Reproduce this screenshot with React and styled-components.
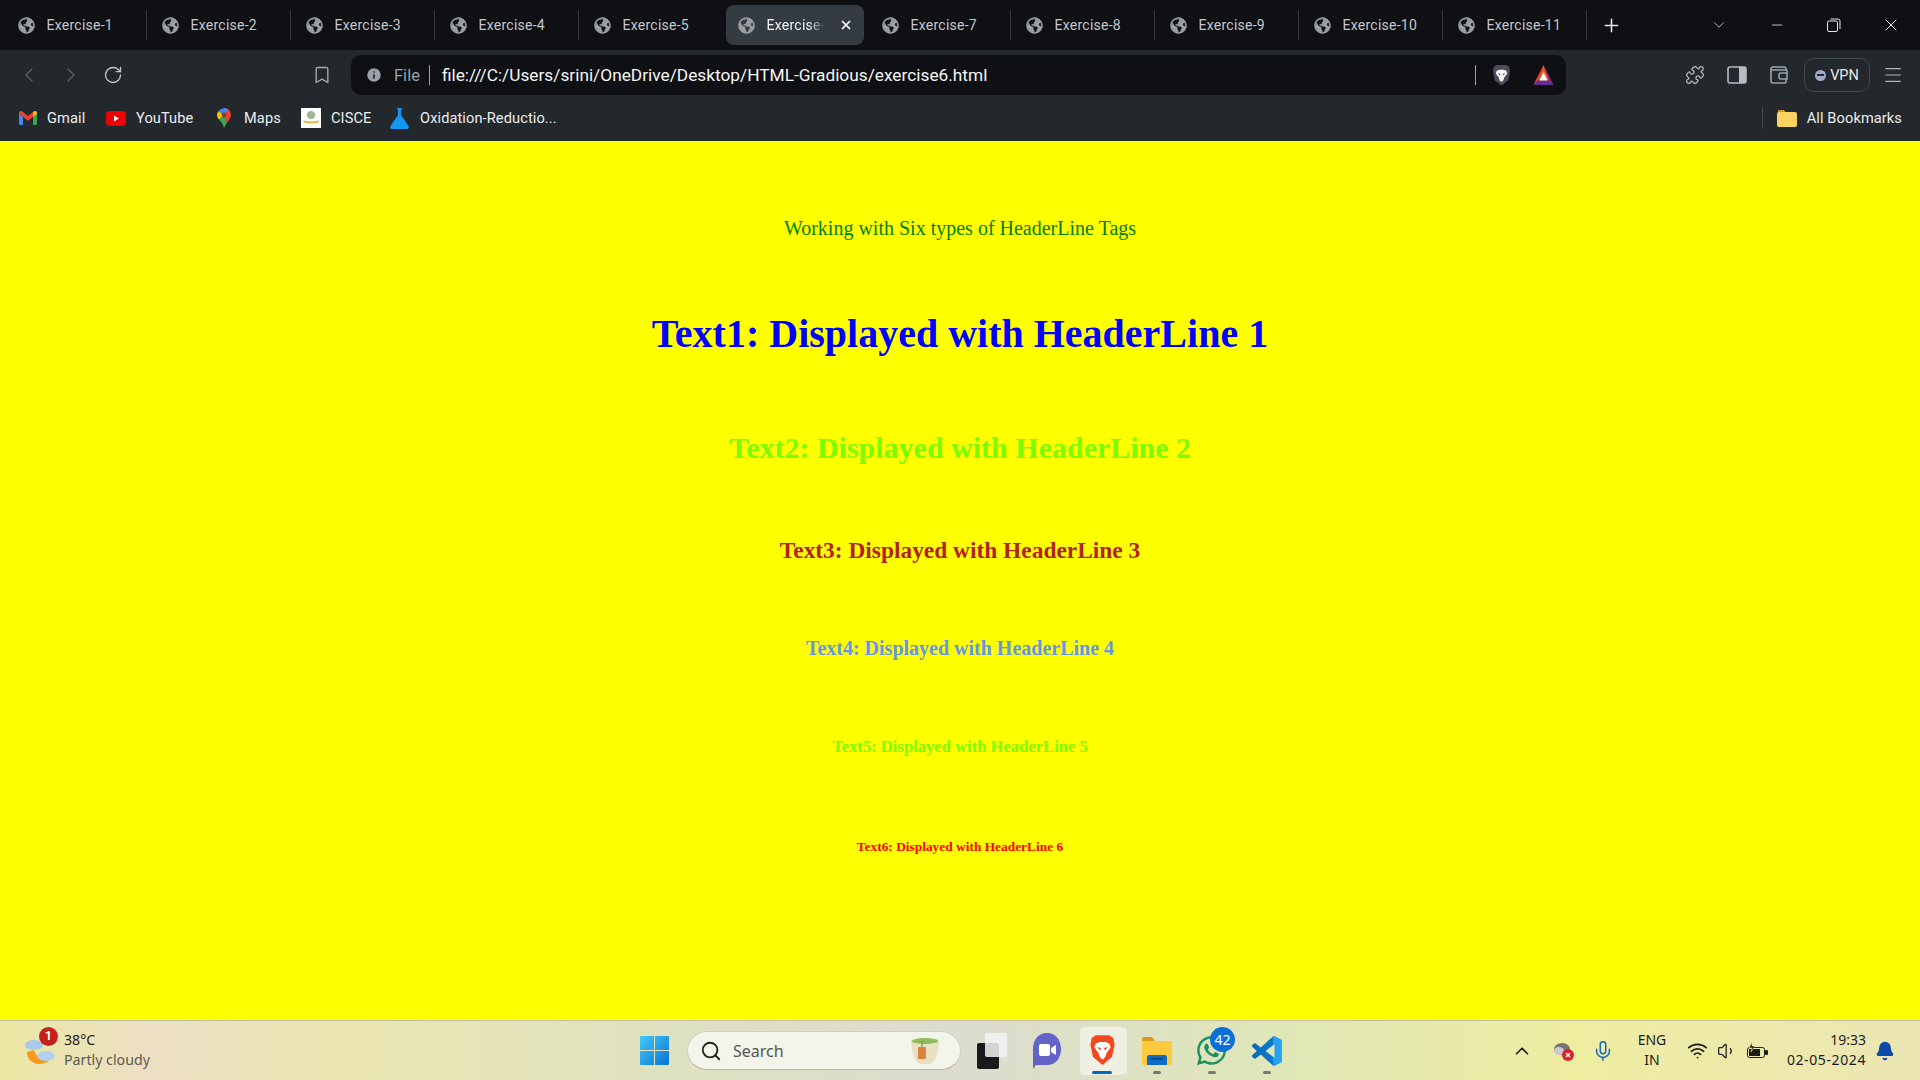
import React from 'react';
import styled, { createGlobalStyle } from 'styled-components';
import {
	ChevronLeft,
	ChevronRight,
	RotateCw,
	Bookmark,
	Plus,
	X,
	Minus,
	ChevronDown,
	ChevronUp,
	Menu,
	Search,
	Puzzle,
	Info,
	Mic,
	Wifi,
	Volume1,
	Bell,
} from 'lucide-react';
import { FaGlobeAmericas, FaWhatsapp } from 'react-icons/fa';

const tabs = ['Exercise-1', 'Exercise-2', 'Exercise-3', 'Exercise-4', 'Exercise-5', 'Exercise-', 'Exercise-7', 'Exercise-8', 'Exercise-9', 'Exercise-10', 'Exercise-11'];

const headings = [
	{ level: 'h1', text: 'Text1: Displayed with HeaderLine 1', size: 40, color: '#0000ff', top: 70 },
	{ level: 'h2', text: 'Text2: Displayed with HeaderLine 2', size: 30, color: '#7cfc00', top: 74 },
	{ level: 'h3', text: 'Text3: Displayed with HeaderLine 3', size: 23.4, color: '#b22222', top: 72 },
	{ level: 'h4', text: 'Text4: Displayed with HeaderLine 4', size: 20, color: '#6495ed', top: 73 },
	{ level: 'h5', text: 'Text5: Displayed with HeaderLine 5', size: 16.6, color: '#7cfc00', top: 77 },
	{ level: 'h6', text: 'Text6: Displayed with HeaderLine 6', size: 13.4, color: '#ff0000', top: 82 },
];

const GmailIcon = () => (
	<svg width='18' height='14' viewBox='0 0 18 14'>
		<path d='M0 2v10.5A1.5 1.5 0 0 0 1.5 14H4V6z' fill='#4285f4' />
		<path d='M14 14h2.5a1.5 1.5 0 0 0 1.5-1.5V2l-4 4z' fill='#34a853' />
		<path d='M0 2l4 4 5 3.8L14 6l4-4c0-1.8-2-2.6-3.2-1.6L9 5 3.2.4C2 -.6 0 .2 0 2z' fill='#ea4335' />
		<path d='M14 1.2V6l4-3V2c0-1.8-2-2.6-3.2-1.6z' fill='#fbbc04' />
	</svg>
);

const YoutubeIcon = () => (
	<svg width='20' height='15' viewBox='0 0 20 15'>
		<rect width='20' height='15' rx='4' fill='#f00000' />
		<path d='M8 4.5v6l5-3z' fill='#fff' />
	</svg>
);

const MapsIcon = () => (
	<svg width='14' height='20' viewBox='0 0 14 20'>
		<path d='M7 0a7 7 0 0 1 7 7c0 4-4 6-7 13z' fill='#ea4335' />
		<path d='M1.500 3A7 7 0 0 0 0 7c0 2 1 3.400 2 4.600L7 7z' fill='#fbbc04' />
		<path d='M2 11.600C4 14 6 16 7 20c.6-2 1.600-3.700 2.800-5.300L7 7z' fill='#34a853' />
		<path d='M1.500 3A7 7 0 0 1 11.500 1.600L7 7z' fill='#4285f4' />
		<circle cx='7' cy='7' r='2.400' fill='#7a4a12' />
	</svg>
);

const CisceIcon = () => (
	<svg width='20' height='20' viewBox='0 0 20 20'>
		<rect width='20' height='20' fill='#fff' />
		<circle cx='10' cy='7' r='4' fill='#9db39a' />
		<path d='M2 12c4 2 12 2 16 0l-1 2.500c-4 1-10 1-14 0z' fill='#e0b23c' />
	</svg>
);

const FlaskIcon = () => (
	<svg width='19' height='21' viewBox='0 0 19 21'>
		<path d='M7 0h5v1.500h-1V7l7.500 11c.8 1.400 0 3-1.500 3H2C.5 21-.3 19.400.5 18L8 7V1.500H7z' fill='#1297f2' />
	</svg>
);

const LionIcon = ({ size = 22, color = '#4b4c5c', face = '#fff' }) => (
	<svg width={size} height={size * 1.2} viewBox='0 0 20 24'>
		<path d='M5 1h10l3 2 1 5-2 9-7 6-7-6-2-9 1-5z' fill={color} />
		<path d='M5 7l3-1h4l3 1 1 3-3 4-1 3-2 2-2-2-1-3-3-4z' fill={face} />
		<path d='M6 9.500l3 1-1 1.500zM14 9.500l-3 1 1 1.500z' fill={color} />
	</svg>
);

const BatIcon = () => (
	<svg width='23' height='22' viewBox='0 0 24 24'>
		<path d='M12 1L1 23l5-5z' fill='#f4412a' />
		<path d='M12 1l-6 17h12z' fill='#f4592a' />
		<path d='M1 23h22l-5-5H6z' fill='#662d91' />
		<path d='M12 1l11 22-5-5z' fill='#a5286e' />
		<path d='M12 9l4.500 9h-9z' fill='#fff' />
	</svg>
);

const SidebarIcon = () => (
	<svg width='20' height='20' viewBox='0 0 20 20'>
		<rect x='1' y='2' width='18' height='16' rx='2' fill='none' stroke='#b4bcc4' strokeWidth='1.600' />
		<rect x='12' y='2' width='7' height='16' fill='#b4bcc4' />
	</svg>
);

const WalletIcon = () => (
	<svg width='20' height='20' viewBox='0 0 20 20' fill='none' stroke='#9aa3ab' strokeWidth='1.600'>
		<path d='M17 5V4a2 2 0 0 0-2-2H4a2 2 0 0 0-2 2v12a2 2 0 0 0 2 2h12a2 2 0 0 0 1-.5V14' />
		<path d='M2 5h15a1 1 0 0 1 1 1v8h-6a2 2 0 0 1-2-2v-2a2 2 0 0 1 2-2h6' />
	</svg>
);

const FolderIcon = () => (
	<svg width='20' height='17' viewBox='0 0 20 17'>
		<path d='M1 0h6l2 3H1z' fill='#d79a1e' />
		<rect y='2' width='20' height='15' rx='2' fill='#fbd35f' />
	</svg>
);

const WeatherIcon = () => (
	<svg width='36' height='36' viewBox='0 0 36 36'>
		<path d='M3 19c0 10 11 16 22 9-5 0-13-3-15-11z' fill='#f39a1c' />
		<ellipse cx='10' cy='12' rx='9' ry='5' fill='#a9c9ec' />
		<ellipse cx='22' cy='23' rx='9' ry='5' fill='#b4cfef' />
	</svg>
);

const WindowsIcon = () => (
	<svg width='29' height='29' viewBox='0 0 29 29'>
		<defs>
			<linearGradient id='win' x1='0' y1='0' x2='1' y2='1'>
				<stop offset='0' stopColor='#45c8fb' />
				<stop offset='1' stopColor='#0a74d0' />
			</linearGradient>
		</defs>
		<path d='M1 0h13v14H0V1a1 1 0 0 1 1-1zM15 0h13a1 1 0 0 1 1 1v13H15zM0 15h14v14H1a1 1 0 0 1-1-1zM15 15h14v13a1 1 0 0 1-1 1H15z' fill='url(#win)' />
	</svg>
);

const CupIcon = () => (
	<svg width='30' height='30' viewBox='0 0 30 30'>
		<path d='M1 4c4-2 24-2 28 0-1 12-3 22-9 24H10C4 26 2 16 1 4z' fill='#e8dfc4' />
		<ellipse cx='15' cy='5' rx='13' ry='3' fill='#8fbc5a' />
		<rect x='8' y='11' width='8' height='12' rx='1' fill='#d9843b' />
		<path d='M12 5v6' stroke='#6f8f3a' />
	</svg>
);

const TaskViewIcon = () => (
	<svg width='30' height='36' viewBox='0 0 30 36'>
		<rect x='0' y='10' width='22' height='26' rx='2' fill='#1a1a1a' />
		<rect x='8' y='0' width='22' height='24' rx='2' fill='#f4f4f4' opacity='.85' />
	</svg>
);

const MeetIcon = () => (
	<svg width='30' height='36' viewBox='0 0 30 36'>
		<path d='M15 0c9 0 14 7 14 16s-5 16-14 16H4l-3 4V16C1 7 6 0 15 0z' fill='#6264c8' />
		<rect x='7' y='11' width='11' height='12' rx='2' fill='#fff' />
		<path d='M19 15l5-3v10l-5-3z' fill='#fff' />
	</svg>
);

const ExplorerIcon = () => (
	<svg width='30' height='28' viewBox='0 0 30 28'>
		<path d='M0 2a2 2 0 0 1 2-2h8l3 4H0z' fill='#d79a1e' />
		<rect y='4' width='30' height='24' rx='1.500' fill='#fcc93f' />
		<path d='M5 20a2 2 0 0 1 2-2h16a2 2 0 0 1 2 2v8H5z' fill='#0f6cc4' />
		<rect x='9' y='21' width='12' height='1.500' fill='#063f78' />
	</svg>
);

const VscodeIcon = () => (
	<svg width='30' height='30' viewBox='0 0 24 24'>
		<defs>
			<linearGradient id='vsc' x1='0' y1='0' x2='1' y2='0'>
				<stop offset='0' stopColor='#0a69b4' />
				<stop offset='.68' stopColor='#0a7bcc' />
				<stop offset='.72' stopColor='#1f9cf0' />
				<stop offset='1' stopColor='#2aa6f2' />
			</linearGradient>
		</defs>
		<path
			d='M23.15 2.587L18.21.21a1.494 1.494 0 0 0-1.705.29l-9.46 8.63-4.12-3.128a.999.999 0 0 0-1.276.057L.327 7.261A1 1 0 0 0 .326 8.74L3.899 12 .326 15.26a1 1 0 0 0 .001 1.479L1.65 17.94a.999.999 0 0 0 1.276.057l4.12-3.128 9.46 8.63a1.492 1.492 0 0 0 1.704.29l4.942-2.377A1.5 1.5 0 0 0 24 20.06V3.939a1.5 1.5 0 0 0-.85-1.352zm-5.146 14.861L10.826 12l7.178-5.448v10.896z'
			fill='url(#vsc)'
		/>
	</svg>
);

const BatteryIcon = () => (
	<svg width='22' height='18' viewBox='0 0 22 18'>
		<rect x='1.500' y='5.500' width='17' height='10' rx='2' fill='#ece8a8' stroke='#1c1c1c' />
		<rect x='3' y='7' width='11' height='7' fill='#1c1c1c' />
		<rect x='19' y='8' width='3' height='5' rx='1' fill='#1c1c1c' />
		<path d='M6 0L3 6h3l-1 4 4-6H6z' fill='#1c1c1c' stroke='#efe9a0' strokeWidth='.6' />
	</svg>
);

const CloudErrorIcon = () => (
	<svg width='22' height='20' viewBox='0 0 22 20'>
		<ellipse cx='9' cy='8' rx='8' ry='6' fill='#777' />
		<ellipse cx='6' cy='10' rx='5' ry='4' fill='#ccc' />
		<circle cx='15' cy='14' r='6' fill='#d8232a' />
		<path d='M13 12l4 4M17 12l-4 4' stroke='#fff' strokeWidth='1.400' />
	</svg>
);

const RestoreGlyph = () => (
	<svg width='14' height='14' viewBox='0 0 14 14' fill='none' stroke='#e8e8e8' strokeWidth='1'>
		<rect x='.5' y='3' width='10' height='10.500' rx='1.500' />
		<path d='M3.500 1h7.500a2 2 0 0 1 2 2v8' />
	</svg>
);

const App = () => {
	return (
		<>
			<GlobalStyle />
			<Screen>
				<TabStrip>
					{tabs.map((name, i) => (
						<Tab key={name} $active={i === 5} $noSep={i === 4 || i === 5}>
							<FaGlobeAmericas size={17} color='#9a9ea3' />
							<TabLabel $active={i === 5}>{name}</TabLabel>
							{i === 5 && <TabClose><X size={14} strokeWidth={3} color='#fff' /></TabClose>}
						</Tab>
					))}
					<NewTab><Plus size={21} color='#e8e8e8' strokeWidth={1.8} /></NewTab>
					<WindowControls>
						<Slot $w={58}><ChevronDown size={18} strokeWidth={1.2} color='#c4c7ca' /></Slot>
						<Slot $w={57}><Minus size={16} strokeWidth={1.2} color='#e8e8e8' /></Slot>
						<Slot $w={57}><RestoreGlyph /></Slot>
						<Slot $w={58}><X size={20} strokeWidth={1.2} color='#e8e8e8' /></Slot>
					</WindowControls>
				</TabStrip>

				<Toolbar>
					<Slot $w={42}><ChevronLeft size={24} strokeWidth={1.2} color='#5d6368' /></Slot>
					<Slot $w={42}><ChevronRight size={24} strokeWidth={1.2} color='#5d6368' /></Slot>
					<Slot $w={42}><RotateCw size={20} strokeWidth={1.6} color='#c0c5c9' /></Slot>
					<BookmarkSlot><Bookmark size={20} strokeWidth={1.6} color='#a6abb0' /></BookmarkSlot>
					<Omnibox>
						<Info size={18} fill='#9aa0a6' color='#0e1014' />
						<FileLabel>File</FileLabel>
						<OmniDivider />
						<Url>file:///C:/Users/srini/OneDrive/Desktop/HTML-Gradious/exercise6.html</Url>
						<OmniRight>
							<OmniDivider />
							<LionSlot><LionIcon size={19} /></LionSlot>
							<BatIcon />
						</OmniRight>
					</Omnibox>
					<ToolbarRight>
						<Slot $w={42}><Puzzle size={20} strokeWidth={1.5} color='#b4bcc4' /></Slot>
						<Slot $w={41}><SidebarIcon /></Slot>
						<Slot $w={43}><WalletIcon /></Slot>
						<VpnPill><VpnDot />VPN</VpnPill>
						<Slot $w={46}><Menu size={22} strokeWidth={1.3} color='#aeb4b9' /></Slot>
					</ToolbarRight>
				</Toolbar>

				<BookmarksBar>
					<Mark $gap={10} $w={87}><GmailIcon /><span>Gmail</span></Mark>
					<Mark $gap={10} $w={111}><YoutubeIcon /><span>YouTube</span></Mark>
					<Mark $gap={13} $w={84}><MapsIcon /><span>Maps</span></Mark>
					<Mark $gap={10} $w={89}><CisceIcon /><span>CISCE</span></Mark>
					<Mark $gap={11} $w={170}><FlaskIcon /><span>Oxidation-Reductio...</span></Mark>
					<AllBookmarks><FolderIcon /><span>All Bookmarks</span></AllBookmarks>
				</BookmarksBar>

				<Page>
					<Intro>Working with Six types of HeaderLine Tags</Intro>
					{headings.map((h) => (
						<Heading key={h.level} as={h.level} $size={h.size} $color={h.color} $top={h.top}>
							{h.text}
						</Heading>
					))}
				</Page>

				<Taskbar>
					<WeatherBlock>
						<WeatherArt>
							<WeatherIcon />
							<WeatherBadge>1</WeatherBadge>
						</WeatherArt>
						<WeatherText>
							<strong>38°C</strong>
							<span>Partly cloudy</span>
						</WeatherText>
					</WeatherBlock>

					<CenterApps>
						<Slot $w={46}><WindowsIcon /></Slot>
						<SearchPill>
							<Search size={22} strokeWidth={2} color='#222' />
							<SearchText>Search</SearchText>
							<CupIcon />
						</SearchPill>
						<AppSlot><TaskViewIcon /></AppSlot>
						<AppSlot><MeetIcon /></AppSlot>
						<AppSlot $active>
							<LionIcon size={27} color='#f1481e' face='#fff' />
							<AppDot $active />
						</AppSlot>
						<AppSlot>
							<ExplorerIcon />
							<AppDot />
						</AppSlot>
						<AppSlot>
							<FaWhatsapp size={33} color='#1f8f5f' />
							<CountBadge>42</CountBadge>
							<AppDot />
						</AppSlot>
						<AppSlot>
							<VscodeIcon />
							<AppDot />
						</AppSlot>
					</CenterApps>

					<Tray>
						<Slot $w={44}><ChevronUp size={22} strokeWidth={1.8} color='#1c1c1c' /></Slot>
						<Slot $w={40}><CloudErrorIcon /></Slot>
						<Slot $w={38}><Mic size={22} strokeWidth={1.6} color='#1467c4' /></Slot>
						<LangBlock>ENG<br />IN</LangBlock>
						<Slot $w={30}><Wifi size={21} strokeWidth={2} color='#1c1c1c' /></Slot>
						<Slot $w={30}><Volume1 size={20} strokeWidth={1.5} color='#1c1c1c' /></Slot>
						<Slot $w={30}><BatteryIcon /></Slot>
						<Clock>19:33<ClockDate>02-05-2024</ClockDate></Clock>
						<Slot $w={38}><Bell size={20} fill='#0a4aa8' color='#0a4aa8' /></Slot>
					</Tray>
				</Taskbar>
			</Screen>
		</>
	);
};

export default App;

const GlobalStyle = createGlobalStyle`
	html, body {
		margin: 0;
		padding: 0;
		overflow: hidden;
	}
	* {
		box-sizing: border-box;
	}
`;

const Screen = styled.div`
	width: 1920px;
	height: 1080px;
	display: flex;
	flex-direction: column;
	overflow: hidden;
	font-family: 'Roboto', 'Liberation Sans', sans-serif;
`;

const Slot = styled.div`
	width: ${(p) => p.$w}px;
	flex: none;
	display: flex;
	align-items: center;
	justify-content: center;
`;

const TabStrip = styled.div`
	height: 50px;
	flex: none;
	background: #0e1014;
	display: flex;
	align-items: center;
	padding-left: 2.5px;
`;

const Tab = styled.div`
	position: relative;
	width: 144px;
	height: 40px;
	flex: none;
	display: flex;
	align-items: center;
	gap: 12px;
	padding-left: 15px;
	isolation: isolate;
	${(p) =>
		p.$active &&
		`&::before {
		content: '';
		position: absolute;
		inset: 0 3px;
		border-radius: 8px;
		background: #343b42;
		z-index: -1;
	}`}
	${(p) =>
		!p.$noSep &&
		`&::after {
		content: '';
		position: absolute;
		right: 0;
		top: 5px;
		height: 30px;
		width: 1px;
		background: #33373c;
	}`}
`;

const TabLabel = styled.span`
	font-size: 14px;
	letter-spacing: 0.25px;
	color: ${(p) => (p.$active ? '#f2f3f4' : '#c4c7ca')};
	white-space: nowrap;
	${(p) =>
		p.$active &&
		`width: 58px;
		overflow: hidden;
		mask-image: linear-gradient(90deg, #000 72%, transparent);`}
`;

const TabClose = styled.span`
	position: absolute;
	right: 13.5px;
	top: 13px;
	display: flex;
`;

const NewTab = styled.div`
	width: 50px;
	flex: none;
	display: flex;
	justify-content: center;
`;

const WindowControls = styled.div`
	margin-left: auto;
	display: flex;
	align-items: center;
`;

const Toolbar = styled.div`
	height: 50px;
	flex: none;
	background: #23282c;
	display: flex;
	align-items: center;
	padding-left: 8px;
`;

const BookmarkSlot = styled.div`
	width: 42px;
	margin-left: 167px;
	flex: none;
	display: flex;
	justify-content: center;
`;

const Omnibox = styled.div`
	width: 1215px;
	height: 40px;
	margin-left: 8px;
	flex: none;
	background: #0e1014;
	border-radius: 10px;
	display: flex;
	align-items: center;
	padding: 0 11px 0 14px;
`;

const FileLabel = styled.span`
	margin-left: 11px;
	font-size: 16.5px;
	color: #9aa0a6;
`;

const OmniDivider = styled.span`
	width: 1px;
	height: 20px;
	background: #9aa0a6;
	margin-left: 9px;
	flex: none;
`;

const Url = styled.span`
	margin-left: 12px;
	font-size: 17.3px;
	color: #f4f5f6;
	white-space: nowrap;
`;

const OmniRight = styled.div`
	margin-left: auto;
	display: flex;
	align-items: center;
`;

const LionSlot = styled.span`
	display: flex;
	margin: 0 21px 0 16px;
`;

const ToolbarRight = styled.div`
	margin-left: 108px;
	display: flex;
	align-items: center;
`;

const VpnPill = styled.div`
	width: 66px;
	height: 34px;
	margin-left: 4px;
	flex: none;
	border: 1px solid #434a50;
	border-radius: 10px;
	display: flex;
	align-items: center;
	justify-content: center;
	gap: 4px;
	font-size: 14.5px;
	color: #e8eaec;
`;

const VpnDot = styled.span`
	width: 11px;
	height: 11px;
	border-radius: 50%;
	background: radial-gradient(circle, #23282c 0 0) center / 7px 2px no-repeat, #a2a6c8;
`;

const BookmarksBar = styled.div`
	height: 41px;
	flex: none;
	background: #23282c;
	display: flex;
	align-items: center;
	padding: 0 18px 5px 19px;
	font-size: 14.6px;
	letter-spacing: 0.1px;
	color: #eceef0;
`;

const Mark = styled.div`
	width: ${(p) => p.$w}px;
	flex: none;
	display: flex;
	align-items: center;
	gap: ${(p) => p.$gap}px;
	white-space: nowrap;
`;

const AllBookmarks = styled.div`
	margin-left: auto;
	height: 22px;
	display: flex;
	align-items: center;
	gap: 10px;
	padding-left: 14px;
	border-left: 1px solid #44494e;
`;

const Page = styled.main`
	flex: 1;
	background: #ffff00;
	padding-top: 76px;
	text-align: center;
	font-family: 'Liberation Serif', 'Times New Roman', serif;
`;

const Intro = styled.p`
	margin: 0;
	font-size: 20px;
	color: #008000;
`;

const Heading = styled.h1`
	margin: ${(p) => p.$top}px 0 0;
	font-size: ${(p) => p.$size}px;
	font-weight: 700;
	color: ${(p) => p.$color};
`;

const Taskbar = styled.footer`
	height: 60px;
	flex: none;
	border-top: 1px solid #c4c2a8;
	background: linear-gradient(90deg, #ece8a4 0%, #ecdfc4 8%, #ebe6b0 18%, #dfe2c0 34%, #dcdcd0 50%, #dfe6b8 66%, #eeeda0 82%, #ece6b4 100%);
	display: flex;
	align-items: center;
	color: #1c1c1c;
`;

const WeatherBlock = styled.div`
	width: 631px;
	flex: none;
	display: flex;
	align-items: center;
	padding-left: 24px;
	gap: 3px;
`;

const WeatherArt = styled.div`
	position: relative;
	width: 37px;
	height: 36px;
	display: flex;
`;

const WeatherBadge = styled.span`
	position: absolute;
	left: 15px;
	top: -6px;
	width: 19px;
	height: 19px;
	border-radius: 50%;
	background: #c4221c;
	color: #fff;
	font-size: 12px;
	font-weight: 700;
	display: flex;
	align-items: center;
	justify-content: center;
`;

const WeatherText = styled.div`
	display: flex;
	flex-direction: column;
	margin-top: -2px;
	font-family: 'Noto Sans', sans-serif;
	font-size: 14.2px;
	line-height: 20px;
	strong {
		font-weight: 400;
	}
	span {
		color: #5a5a54;
	}
`;

const CenterApps = styled.div`
	display: flex;
	align-items: center;
`;

const SearchPill = styled.div`
	width: 274px;
	height: 39px;
	margin: 0 3px 0 10px;
	flex: none;
	background: #f3f4ea;
	border: 1px solid #cfd0c2;
	border-bottom-color: #b4b5a8;
	border-radius: 20px;
	display: flex;
	align-items: center;
	padding: 0 20px 0 12px;
	font-family: 'Noto Sans', sans-serif;
`;

const SearchText = styled.span`
	margin-left: 11px;
	flex: 1;
	font-size: 16px;
	color: #555;
`;

const AppSlot = styled.div`
	position: relative;
	width: 55px;
	height: 48px;
	flex: none;
	display: flex;
	align-items: center;
	justify-content: center;
	${(p) =>
		p.$active &&
		`background: #efefe4;
		border-radius: 4px;
		width: 44px;
		margin: 0 5px 0 6px;
		box-shadow: 4px 0 0 -1px rgba(245, 245, 232, .7);`}
`;

const AppDot = styled.span`
	position: absolute;
	bottom: 1px;
	left: 50%;
	transform: translateX(-50%);
	width: ${(p) => (p.$active ? 20 : 8)}px;
	height: 3px;
	border-radius: 2px;
	background: ${(p) => (p.$active ? '#0067c0' : '#777')};
`;

const CountBadge = styled.span`
	position: absolute;
	top: 0;
	left: 26px;
	width: 25px;
	height: 25px;
	border-radius: 50%;
	background: #0a6fd8;
	color: #fff;
	font-size: 14px;
	display: flex;
	align-items: center;
	justify-content: center;
	font-family: 'Noto Sans', sans-serif;
`;

const Tray = styled.div`
	margin-left: auto;
	padding-right: 16px;
	display: flex;
	align-items: center;
	font-family: 'Noto Sans', sans-serif;
	font-size: 14px;
	line-height: 20px;
`;

const LangBlock = styled.div`
	width: 60px;
	flex: none;
	text-align: center;
	margin-top: -1px;
`;

const Clock = styled.div`
	width: 94px;
	flex: none;
	text-align: right;
	margin-top: -1px;
`;

const ClockDate = styled.div`
	letter-spacing: 0.6px;
`;
